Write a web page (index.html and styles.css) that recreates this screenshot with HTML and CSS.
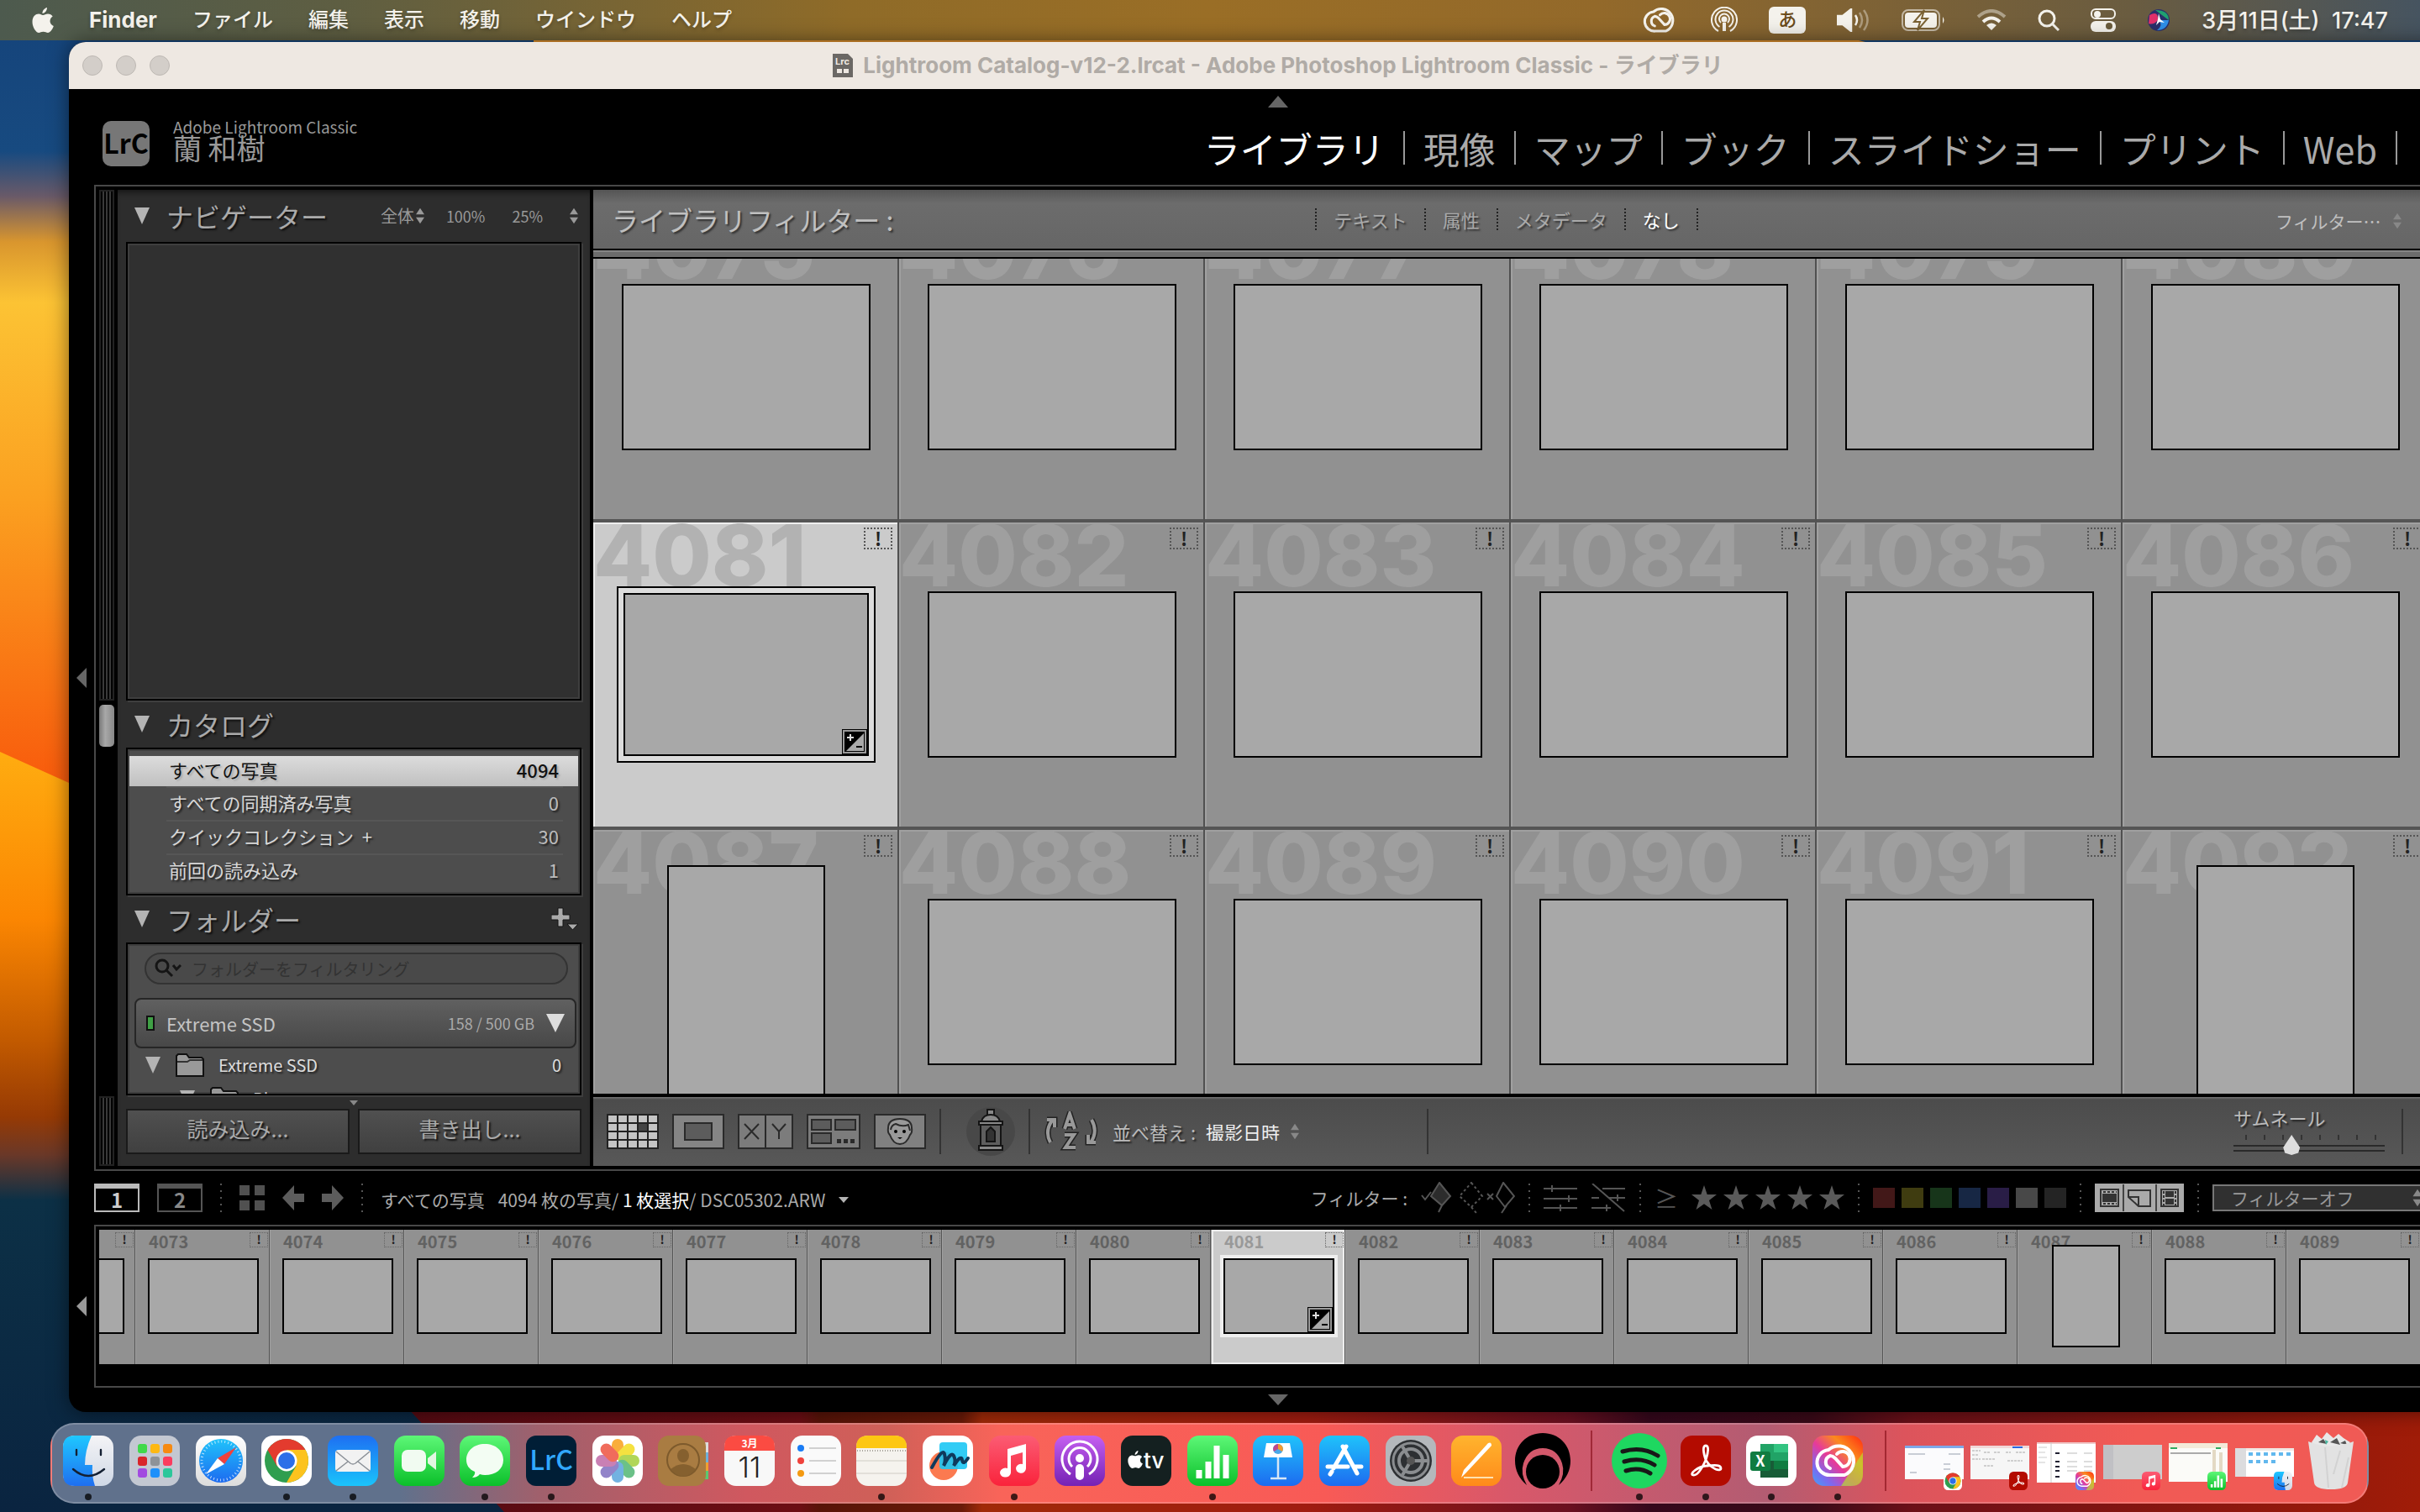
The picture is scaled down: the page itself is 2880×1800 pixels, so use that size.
FILE: index.html
```html
<!DOCTYPE html>
<html lang="ja">
<head>
    <meta charset="UTF-8">
    <title>Lightroom Classic - ライブラリ</title>
    <link rel="stylesheet" href="styles.css">
</head>
<body>
    <!-- shared icons -->
    <svg class="defs" aria-hidden="true">
        <defs>
            <linearGradient id="gBlue" x2="0" y2="1"><stop offset="0" stop-color="#1e6ff2"/><stop offset="1" stop-color="#1ac4fb"/></linearGradient>
            <linearGradient id="gSky" x2="0" y2="1"><stop offset="0" stop-color="#1fc3fb"/><stop offset="1" stop-color="#1d6bf0"/></linearGradient>
            <linearGradient id="gGreen" x2="0" y2="1"><stop offset="0" stop-color="#5df777"/><stop offset="1" stop-color="#0bc02a"/></linearGradient>
            <linearGradient id="gRed" x2="0" y2="1"><stop offset="0" stop-color="#fb5c74"/><stop offset="1" stop-color="#fa233b"/></linearGradient>
            <linearGradient id="gPurple" x2="0" y2="1"><stop offset="0" stop-color="#c55ff0"/><stop offset="1" stop-color="#7422b4"/></linearGradient>
            <linearGradient id="gOrange" x2="0" y2="1"><stop offset="0" stop-color="#ffb42e"/><stop offset="1" stop-color="#ff8a1a"/></linearGradient>
            <linearGradient id="gWhite" x2="0" y2="1"><stop offset="0" stop-color="#fff"/><stop offset="1" stop-color="#dcdcdc"/></linearGradient>
            <linearGradient id="gFace" x2="0" y2="1"><stop offset="0" stop-color="#f4f4f6"/><stop offset="1" stop-color="#cfd8e6"/></linearGradient>
            <linearGradient id="gFinder" x2="0" y2="1"><stop offset="0" stop-color="#1ec8ff"/><stop offset="1" stop-color="#1f6ff0"/></linearGradient>
            <linearGradient id="gRain" x1="1" y1="0" x2="0" y2="1"><stop offset="0" stop-color="#ff2a10"/><stop offset=".3" stop-color="#fb8a1e"/><stop offset=".55" stop-color="#e63a9a"/><stop offset=".8" stop-color="#7a6af0"/><stop offset="1" stop-color="#3fa4f8"/></linearGradient>
            <symbol id="i-finder" viewBox="0 0 60 60">
                <rect width="60" height="60" rx="14" fill="url(#gFace)"/>
                <path d="M14 0H34Q26 18 26 35H35Q34 48 38 60H14Q0 60 0 46V14Q0 0 14 0Z" fill="url(#gFinder)"/>
                <path d="M16 17v6M45 17v6M12 40Q30 56 49 40" fill="none" stroke="#142033" stroke-width="2.4" stroke-linecap="round"/>
            </symbol>
            <symbol id="i-chrome" viewBox="0 0 60 60">
                <rect width="60" height="60" rx="14" fill="#fff"/>
                <circle cx="30" cy="30" r="26" fill="#2f9e4f"/>
                <path d="M7.500 17A26 26 0 0 1 52.500 17H30L18.700 36.500Z" fill="#e33b2e"/>
                <path d="M52.500 17A26 26 0 0 1 30 56L41.300 36.500L30 17Z" fill="#fcc31e"/>
                <circle cx="30" cy="30" r="12.500" fill="#fff"/><circle cx="30" cy="30" r="10" fill="#2b6fe8"/>
            </symbol>
            <symbol id="i-music" viewBox="0 0 60 60">
                <rect width="60" height="60" rx="14" fill="url(#gRed)"/>
                <path d="M22 16L44 10V39A6 5.500 0 1 1 40 34V20L26 24V44A6.500 5.500 0 1 1 22 39Z" fill="#fff"/>
            </symbol>
            <symbol id="i-numbers" viewBox="0 0 60 60">
                <rect width="60" height="60" rx="14" fill="url(#gGreen)"/>
                <path d="M14 51V41M25 51V31M35 51V12M46 51V23" stroke="#fff" stroke-width="7"/>
            </symbol>
            <symbol id="i-acrobat" viewBox="0 0 60 60">
                <rect width="60" height="60" rx="14" fill="#b30b00"/>
                <path d="M30 29C27 20 26 12 30 12S33 20 30 29C26 38 20 48 15 47S20 37 31 36S48 35 48 39S37 41 30 29Z" fill="none" stroke="#fff" stroke-width="2.800"/>
            </symbol>
            <symbol id="i-cloud" viewBox="0 0 60 60">
                <path d="M22 47A15 15 0 0 1 19 17A18 18 0 1 1 38 47Z" fill="none" stroke="currentColor" stroke-width="4"/>
                <path d="M21 39A8 8 0 0 1 21 24Q24 24 27 27L36 37A9 9 0 1 0 29 22" fill="none" stroke="currentColor" stroke-width="4" stroke-linecap="round"/>
            </symbol>
            <symbol id="i-cc" viewBox="0 0 60 60">
                <rect width="60" height="60" rx="14" fill="url(#gRain)"/>
                <path d="M60 20V46Q60 60 46 60H34Z" fill="#b6dc30" opacity=".7"/>
                <use href="#i-cloud" color="#fff"/>
            </symbol>
            <symbol id="i-apple" viewBox="0 0 26 30">
                <path d="M18 0C18 4 15 7 12.500 7C12.200 4 15 .5 18 0ZM13 9C15 9 16.500 7.500 19 7.500C21.500 7.500 23.500 8.800 24.700 10.500C20 13.500 20.800 20 25.800 22C24.500 26 21.500 30 19 30C17 30 16 28.800 13.500 28.800S10 30 8.200 30C5 30 .5 23.500 .5 17C.5 10.500 4.500 7.600 8 7.600C10.300 7.600 11.500 9 13 9Z" fill="currentColor"/>
            </symbol>
            <symbol id="i-updown" viewBox="0 0 12 26"><path d="M6 2L12 11H0ZM6 24L0 15H12Z" fill="currentColor"/></symbol>
            <symbol id="i-dev" viewBox="0 0 30 30">
                <path d="M0 0H30V30H0Z" fill="#000"/><path d="M2 2H28V28H2Z" fill="none" stroke="#999" stroke-width="2"/><path d="M26 5V26H5Z" fill="#aaa"/>
                <path d="M6 10h8M10 6v8" stroke="#ddd" stroke-width="2"/><path d="M17 21h7" stroke="#000" stroke-width="2"/>
            </symbol>
            <symbol id="i-star" viewBox="0 0 30 30"><path d="M15 0L18.700 11H30L21 18L24.500 29L15 22.300L5.500 29L9 18L0 11H11.300Z" fill="currentColor"/></symbol>
        </defs>
    </svg>

    <svg class="wallpaper" viewBox="0 0 2880 1800" preserveAspectRatio="none" aria-hidden="true">
        <defs>
            <linearGradient id="wLeft" x2="0" y2="1">
                <stop offset="0" stop-color="#15437a"/><stop offset=".1" stop-color="#174a80"/><stop offset=".13" stop-color="#6a5a68"/><stop offset=".16" stop-color="#d9962e"/><stop offset=".2" stop-color="#fcc334"/><stop offset=".33" stop-color="#fba020"/><stop offset=".52" stop-color="#f85a0c"/>
            </linearGradient>
            <linearGradient id="wLow" x2="0" y2="1">
                <stop offset="0" stop-color="#ffac10"/><stop offset=".22" stop-color="#fb8602"/><stop offset=".38" stop-color="#c25a00"/><stop offset=".48" stop-color="#963a04"/><stop offset=".53" stop-color="#6a3828"/><stop offset=".59" stop-color="#0c3046"/><stop offset="1" stop-color="#0a2440"/>
            </linearGradient>
            <linearGradient id="wBottom">
                <stop offset="0" stop-color="#550a12"/><stop offset=".2" stop-color="#6c0e14"/><stop offset=".21" stop-color="#581408"/><stop offset=".28" stop-color="#6a1a08"/><stop offset=".29" stop-color="#a02a08"/><stop offset=".45" stop-color="#a01c10"/><stop offset=".58" stop-color="#6a1020"/><stop offset=".62" stop-color="#35081c"/><stop offset=".7" stop-color="#3a0a18"/><stop offset=".75" stop-color="#6c1018"/><stop offset="1" stop-color="#a01c08"/>
            </linearGradient>
        </defs>
        <path d="M0 0H2880V1800H0Z" fill="url(#wLeft)"/>
        <path d="M0 895L82 932H900V1800H0Z" fill="url(#wLow)"/>
        <path d="M635 40H2180L2260 60H635Z" fill="#e0902e"/>
        <path d="M470 1660H2880V1800H600Z" fill="url(#wBottom)"/>
    </svg>

    <header class="menubar">
        <a class="apple" href="#" aria-label="Apple"><svg width="26" height="30"><use href="#i-apple"/></svg></a>
        <nav class="menus">
            <a class="app-name" href="#">Finder</a>
            <a href="#">ファイル</a>
            <a href="#">編集</a>
            <a href="#">表示</a>
            <a href="#">移動</a>
            <a href="#">ウインドウ</a>
            <a href="#">ヘルプ</a>
        </nav>
        <div class="status">
            <svg width="44" height="40" viewBox="4 4 54 52"><use href="#i-cloud" width="60" height="60"/></svg>
            <svg width="32" height="32" viewBox="0 0 32 32" fill="none" stroke="currentColor" stroke-width="2"><path d="M9 29A15 15 0 1 1 23 29M10.500 24A10.500 10.500 0 1 1 21.500 24M12 19A6 6 0 1 1 20 19"/><circle cx="16" cy="15" r="2.500" fill="currentColor"/><path d="M16 19V29" stroke-width="4"/></svg>
            <span class="ime">あ</span>
            <svg width="40" height="28" viewBox="0 0 40 28" fill="none" stroke="currentColor" stroke-width="2.500"><path d="M1 9H7L17 1V27L7 19H1Z" fill="currentColor"/><path d="M22 8Q26 14 22 20"/><path d="M27 5Q33 14 27 23M32 2Q41 14 32 26" opacity=".4"/></svg>
            <svg width="52" height="26" viewBox="0 0 52 26"><rect x="1" y="1" width="44" height="24" rx="7" fill="none" stroke="currentColor" stroke-width="2" opacity=".6"/><rect x="4" y="4" width="38" height="18" rx="4" fill="currentColor"/><path d="M49 9Q52 13 49 17Z" fill="currentColor"/><path d="M27 1L15 15H22L19 25L31 11H24Z" fill="currentColor" stroke="#7a6132" stroke-width="2"/></svg>
            <svg width="36" height="26" viewBox="0 0 36 26" fill="none" stroke="currentColor" stroke-width="4"><path d="M2 9Q18 -5 34 9" opacity=".45"/><path d="M8 15Q18 6 28 15"/><path d="M18 25L12 19Q18 14 24 19Z" fill="currentColor" stroke="none"/></svg>
            <svg width="26" height="26" viewBox="0 0 26 26" fill="none" stroke="currentColor" stroke-width="3"><circle cx="11" cy="11" r="9"/><path d="M17 17L25 25"/></svg>
            <svg width="30" height="28" viewBox="0 0 30 28"><rect x="1" y="1" width="28" height="11" rx="5" fill="none" stroke="currentColor" stroke-width="2"/><circle cx="8" cy="7" r="4" fill="currentColor"/><rect y="15" width="30" height="13" rx="6" fill="currentColor"/><circle cx="22" cy="21" r="4" fill="#6a5c3c"/></svg>
            <svg width="28" height="28" viewBox="0 0 28 28"><circle cx="14" cy="14" r="13" fill="#2a2f6a"/><path d="M3 8Q14 2 13 14Q8 20 2 18Z" fill="#e0306a"/><path d="M10 2Q26 2 26 14Q18 8 10 2Z" fill="#1fa070"/><path d="M26 14Q24 26 12 26Q20 20 14 14Z" fill="#2f8fe8"/><path d="M14 6L16 13L21 17L15 16L11 20L13 13Z" fill="#fff"/></svg>
            <time>3月11日(土)&nbsp; 17:47</time>
        </div>
    </header>

    <main class="window">
        <div class="titlebar">
            <div class="lights"><span></span><span></span><span></span></div>
            <div class="title">
                <svg width="24" height="28" viewBox="0 0 24 28"><path d="M0 0H18L24 6V28H0Z" fill="#6b6865"/><text x="3" y="13" class="doc-label">Lrc</text><path d="M5 18h6v5H5zM13 18h6v5h-6z" fill="#eee8e2"/></svg>
                <span>Lightroom Catalog-v12-2.lrcat - Adobe Photoshop Lightroom Classic - ライブラリ</span>
            </div>
        </div>

        <div class="identity">
            <button class="fold up" aria-label="モジュールピッカーを隠す"></button>
            <div class="plate">
                <div class="lrc-logo">LrC</div>
                <div class="owner"><small>Adobe Lightroom Classic</small><b>蘭 和樹</b></div>
            </div>
            <nav class="modules">
                <a class="active" href="#">ライブラリ</a>
                <a href="#">現像</a>
                <a href="#">マップ</a>
                <a href="#">ブック</a>
                <a href="#">スライドショー</a>
                <a href="#">プリント</a>
                <a href="#">Web</a>
            </nav>
        </div>

        <div class="workspace-row">
            <div class="gutter"><button class="fold left" aria-label="左パネルを隠す"></button></div>
            <div class="workspace">
                <div class="scroll">
                    <div class="strips top"></div>
                    <div class="thumb"></div>
                    <div class="hole"></div>
                    <div class="strips"></div>
                </div>

                <aside class="panel">
                    <div class="head nav-head">
                        <i class="tri"></i><h2>ナビゲーター</h2>
                        <div class="zoom">
                            <button class="fit">全体<svg width="10" height="22"><use href="#i-updown"/></svg></button>
                            <button>100%</button>
                            <button>25%</button>
                            <svg width="10" height="22"><use href="#i-updown"/></svg>
                        </div>
                    </div>
                    <div class="box preview"></div>

                    <div class="head"><i class="tri"></i><h2>カタログ</h2></div>
                    <div class="box catalog">
                        <a class="selected" href="#">すべての写真<span>4094</span></a>
                        <a href="#">すべての同期済み写真<span>0</span></a>
                        <a href="#">クイックコレクション &nbsp;+<span>30</span></a>
                        <a href="#">前回の読み込み<span>1</span></a>
                    </div>

                    <div class="head">
                        <i class="tri"></i><h2>フォルダー</h2>
                        <button class="add" aria-label="フォルダーを追加"><svg width="32" height="28" viewBox="0 0 32 28"><path d="M8 1h6v8h8v6h-8v8H8v-8H0V9h8z" fill="#aaa" stroke="#151515"/><path d="M19 20H32L25.500 27Z" fill="#aaa" stroke="#151515"/></svg></button>
                    </div>
                    <div class="box folders">
                        <label class="search">
                            <svg width="32" height="24" viewBox="0 0 32 24" fill="none" stroke="#151515" stroke-width="3"><circle cx="9" cy="9" r="7"/><path d="M14 14L21 21M22 8L26 13L31 8"/></svg>
                            <input type="text" placeholder="フォルダーをフィルタリング" aria-label="フォルダーをフィルタリング">
                        </label>
                        <button class="volume"><i class="led"></i><span>Extreme SSD</span><small>158 / 500 GB</small><i class="tri big"></i></button>
                        <a class="folder" href="#"><i class="tri"></i>
                            <svg width="34" height="28" viewBox="0 0 34 28"><path d="M1 27V3L3 1H13L16 5H31L33 7V27Z" fill="#999" stroke="#111" stroke-width="2"/><path d="M2 10H14L17 8H32" stroke="#333" stroke-width="2" fill="none"/></svg>
                            <span>Extreme SSD</span><b>0</b></a>
                        <a class="folder sub" href="#"><i class="tri"></i>
                            <svg width="34" height="28" viewBox="0 0 34 28"><path d="M1 27V3L3 1H13L16 5H31L33 7V27Z" fill="#999" stroke="#111" stroke-width="2"/></svg>
                            <span>Photo</span></a>
                    </div>
                    <i class="more"></i>
                    <div class="actions"><button>読み込み...</button><button>書き出し...</button></div>
                </aside>

                <section class="library">
                    <div class="filter-bar">
                        <h2>ライブラリフィルター :</h2>
                        <div class="tabs">
                            <button>テキスト</button><button>属性</button><button>メタデータ</button><button class="active">なし</button>
                        </div>
                        <label class="pick preset"><select aria-label="フィルタープリセット"><option>フィルター…</option></select><svg width="10" height="22"><use href="#i-updown"/></svg></label>
                    </div>
                    <div class="filter-edge"></div>

                    <div class="grid-view">
                        <div class="grid">
                            <div class="cell"><b>4075</b><i class="badge">!</i><div class="photo"></div></div>
                            <div class="cell"><b>4076</b><i class="badge">!</i><div class="photo"></div></div>
                            <div class="cell"><b>4077</b><i class="badge">!</i><div class="photo"></div></div>
                            <div class="cell"><b>4078</b><i class="badge">!</i><div class="photo"></div></div>
                            <div class="cell"><b>4079</b><i class="badge">!</i><div class="photo"></div></div>
                            <div class="cell"><b>4080</b><i class="badge">!</i><div class="photo"></div></div>
                            <div class="cell selected"><b>4081</b><i class="badge">!</i><div class="mat"><div class="photo"><svg class="dev" width="30" height="30"><use href="#i-dev"/></svg></div></div></div>
                            <div class="cell"><b>4082</b><i class="badge">!</i><div class="photo"></div></div>
                            <div class="cell"><b>4083</b><i class="badge">!</i><div class="photo"></div></div>
                            <div class="cell"><b>4084</b><i class="badge">!</i><div class="photo"></div></div>
                            <div class="cell"><b>4085</b><i class="badge">!</i><div class="photo"></div></div>
                            <div class="cell"><b>4086</b><i class="badge">!</i><div class="photo"></div></div>
                            <div class="cell portrait"><b>4087</b><i class="badge">!</i><div class="photo"></div></div>
                            <div class="cell"><b>4088</b><i class="badge">!</i><div class="photo"></div></div>
                            <div class="cell"><b>4089</b><i class="badge">!</i><div class="photo"></div></div>
                            <div class="cell"><b>4090</b><i class="badge">!</i><div class="photo"></div></div>
                            <div class="cell"><b>4091</b><i class="badge">!</i><div class="photo"></div></div>
                            <div class="cell portrait"><b>4092</b><i class="badge">!</i><div class="photo"></div></div>
                        </div>
                    </div>

                    <div class="toolbar">
                        <button aria-label="グリッド表示"><svg width="62" height="42" viewBox="0 0 62 42"><path d="M0 0H62V42H0Z" fill="#222"/><path d="M2 6H60M2 16H60M2 26H60M2 36H60" stroke="#c4c4c4" stroke-width="8" stroke-dasharray="10 2"/><path d="M38 12H48V20H38Z" fill="#444"/></svg></button>
                        <button aria-label="ルーペ表示"><svg width="62" height="42" viewBox="0 0 62 42"><path d="M1 1H61V41H1Z" fill="#858585" stroke="#2a2a2a" stroke-width="2"/><path d="M15 11H47V31H15Z" fill="#5c5c5c" stroke="#2a2a2a" stroke-width="2"/></svg></button>
                        <button aria-label="比較表示"><svg width="66" height="42" viewBox="0 0 66 42"><path d="M1 1H65V41H1ZM33 1V41" fill="#7c7c7c" stroke="#2a2a2a" stroke-width="2"/><path d="M8 12L25 30M25 12L8 30M41 12L49 21L57 12M49 21V30" stroke="#2a2a2a" stroke-width="2" fill="none"/></svg></button>
                        <button aria-label="選別表示"><svg width="64" height="42" viewBox="0 0 64 42"><path d="M1 1H63V41H1Z" fill="#7c7c7c" stroke="#2a2a2a" stroke-width="2"/><path d="M6 7H29V19H6ZM34 7H58V19H34ZM6 23H29V35H6Z" fill="#5c5c5c" stroke="#2a2a2a" stroke-width="2"/><path d="M36 30h5v5h-5zM44 30h5v5h-5zM52 30h5v5h-5z" fill="#2a2a2a"/></svg></button>
                        <button aria-label="人物表示"><svg width="62" height="42" viewBox="0 0 62 42"><path d="M1 1H61V41H1Z" fill="#808080" stroke="#2a2a2a" stroke-width="2"/><path d="M17 17Q17 6 31 6T45 17Q46 22 43 25Q39 36 31 36T19 25Q16 22 17 17ZM20 19Q21 13 26 12Q34 16 41 13L43 20" fill="#999" stroke="#2a2a2a" stroke-width="2"/><circle cx="26" cy="21" r="2"/><circle cx="36" cy="21" r="2"/><path d="M28 28h6l-3 2z"/></svg></button>
                        <i class="sep"></i>
                        <button class="spray" aria-label="スプレー"><svg width="58" height="58" viewBox="0 0 58 58"><circle cx="29" cy="29" r="29" fill="#484848"/><g fill="#888" stroke="#151515" stroke-width="2"><path d="M25 3h8v7h-8z"/><path d="M18 17Q20 9 29 9T40 17Z"/><path d="M17 21H41V46H17Z" fill="#5e5e5e"/><path d="M15 17H43V21H15ZM15 46H43V51H15Z"/><path d="M24 41V29L29 24L34 29V41Z" fill="#333"/></g></svg></button>
                        <i class="sep"></i>
                        <button aria-label="並べ替え方向"><svg width="66" height="48" viewBox="0 0 66 48" fill="none" stroke="#222" stroke-width="7"><path d="M8 37Q1 24 10 11M4 10H13V19M57 10Q65 24 56 37M62 37H53V28M25 21L31 3L37 21M27 16H36M25 28H36L26 43H38"/><path d="M8 37Q1 24 10 11M4 10H13V19M57 10Q65 24 56 37M62 37H53V28M25 21L31 3L37 21M27 16H36M25 28H36L26 43H38" stroke="#999" stroke-width="4"/></svg></button>
                        <label class="pick sort"><span>並べ替え :</span><select><option>撮影日時</option></select><svg width="10" height="26"><use href="#i-updown"/></svg></label>
                        <i class="sep after-sort"></i>
                        <label class="size">サムネール<input type="range" min="0" max="100" value="37"></label>
                        <i class="sep"></i>
                    </div>
                </section>
            </div>
        </div>

        <div class="film-bar">
            <button class="screen on">1</button>
            <button class="screen">2</button>
            <i class="dots"></i>
            <button aria-label="グリッド"><svg width="30" height="30" viewBox="0 0 30 30"><path d="M0 0h12v12H0zM18 0h12v12H18zM0 18h12v12H0zM18 18h12v12H18z" fill="#505050"/></svg></button>
            <button aria-label="戻る"><svg width="26" height="30" viewBox="0 0 26 30"><path d="M0 15L14 0V10H26V20H14V30Z" fill="#5c5c5c"/></svg></button>
            <button aria-label="進む"><svg width="26" height="30" viewBox="0 0 26 30"><path d="M26 15L12 0V10H0V20H12V30Z" fill="#5c5c5c"/></svg></button>
            <i class="dots"></i>
            <div class="crumbs"><span>すべての写真</span><span>4094 枚の写真/ <b>1 枚選択</b>/ DSC05302.ARW</span><i class="tri"></i></div>

            <div class="filters">
                <span>フィルター :</span>
                <svg width="112" height="38" viewBox="0 0 112 38" fill="none" stroke="#555" stroke-width="2"><path d="M22 1L35 17L25 28L12 17ZM25 28L21 36" fill="#2c2c2c"/><path d="M1 16L5 21L12 12"/><path d="M60 1L73 17L60 30L46 17ZM60 30L66 37" stroke-dasharray="3 3"/><path d="M98 1L111 17L100 30L90 17ZM102 28L96 37M79 14L86 21M86 14L79 21"/></svg>
                <i class="dots"></i>
                <svg width="98" height="34" viewBox="0 0 98 34" stroke="#555" stroke-width="2"><path d="M0 6H40M0 18H40M0 29H40M10 2V10M30 14V22M20 25V33M58 0L96 33M70 6H97M57 17H66M78 17H97M88 13V21M57 29H80M75 25V33"/></svg>
                <i class="dots"></i>
                <span class="ge">≥</span>
                <span class="stars"><svg width="30" height="30"><use href="#i-star"/></svg><svg width="30" height="30"><use href="#i-star"/></svg><svg width="30" height="30"><use href="#i-star"/></svg><svg width="30" height="30"><use href="#i-star"/></svg><svg width="30" height="30"><use href="#i-star"/></svg></span>
                <i class="dots"></i>
                <span class="swatches"><i class="red"></i><i class="yellow"></i><i class="green"></i><i class="blue"></i><i class="purple"></i><i class="white"></i><i class="none"></i></span>
                <i class="dots"></i>
                <svg width="106" height="34" viewBox="0 0 106 34"><path d="M0 0H106V34H0Z" fill="#aaa"/><path d="M34 1V33M73 1V33" stroke="#444" stroke-width="2"/><g fill="none" stroke="#333" stroke-width="2"><path d="M7 7H28V27H7Z"/><path d="M10 13H25V21H10Z" fill="#333"/><path d="M10 10H26M10 24H26" stroke-dasharray="3 2"/><path d="M40 8H66V27H52L40 16ZM40 16H52V27"/><path d="M79 7H99V27H79Z"/><path d="M85 10H93V15H85ZM85 19H93V24H85Z" fill="#333"/><path d="M82 9V26M96 9V26" stroke-dasharray="3 2"/></g></svg>
                <i class="dots"></i>
                <label class="pick off"><select aria-label="フィルター"><option>フィルターオフ</option></select><svg width="14" height="24"><use href="#i-updown"/></svg></label>
            </div>
        </div>

        <div class="film-row">
            <div class="gutter"><button class="fold left light" aria-label="前へ"></button></div>
            <div class="filmstrip">
                <div class="film">
                    <div class="frame"><b>4072</b><i class="badge">!</i><div class="photo"></div></div>
                    <div class="frame"><b>4073</b><i class="badge">!</i><div class="photo"></div></div>
                    <div class="frame"><b>4074</b><i class="badge">!</i><div class="photo"></div></div>
                    <div class="frame"><b>4075</b><i class="badge">!</i><div class="photo"></div></div>
                    <div class="frame"><b>4076</b><i class="badge">!</i><div class="photo"></div></div>
                    <div class="frame"><b>4077</b><i class="badge">!</i><div class="photo"></div></div>
                    <div class="frame"><b>4078</b><i class="badge">!</i><div class="photo"></div></div>
                    <div class="frame"><b>4079</b><i class="badge">!</i><div class="photo"></div></div>
                    <div class="frame"><b>4080</b><i class="badge">!</i><div class="photo"></div></div>
                    <div class="frame selected"><b>4081</b><i class="badge">!</i><div class="photo"><svg class="dev" width="30" height="30"><use href="#i-dev"/></svg></div></div>
                    <div class="frame"><b>4082</b><i class="badge">!</i><div class="photo"></div></div>
                    <div class="frame"><b>4083</b><i class="badge">!</i><div class="photo"></div></div>
                    <div class="frame"><b>4084</b><i class="badge">!</i><div class="photo"></div></div>
                    <div class="frame"><b>4085</b><i class="badge">!</i><div class="photo"></div></div>
                    <div class="frame"><b>4086</b><i class="badge">!</i><div class="photo"></div></div>
                    <div class="frame portrait"><b>4087</b><i class="badge">!</i><div class="photo"></div></div>
                    <div class="frame"><b>4088</b><i class="badge">!</i><div class="photo"></div></div>
                    <div class="frame"><b>4089</b><i class="badge">!</i><div class="photo"></div></div>
                </div>
            </div>
        </div>
        <div class="bottom-edge"><button class="fold down" aria-label="フィルムストリップを隠す"></button></div>
    </main>

    <footer class="dock">
        <div class="apps main">
            <a class="run" href="#" aria-label="Finder"><svg><use href="#i-finder"/></svg></a>
            <a href="#" aria-label="Launchpad"><svg viewBox="0 0 60 60"><rect width="60" height="60" rx="14" fill="#c3c8d2"/><g><rect x="10" y="10" width="11" height="11" rx="3" fill="#3fd94a"/><rect x="25" y="10" width="11" height="11" rx="3" fill="#fdb813"/><rect x="40" y="10" width="11" height="11" rx="3" fill="#f68a12"/><rect x="10" y="25" width="11" height="11" rx="3" fill="#d9252a"/><rect x="25" y="25" width="11" height="11" rx="3" fill="#8e9298"/><rect x="40" y="25" width="11" height="11" rx="3" fill="#fb3c5e"/><rect x="10" y="39" width="11" height="11" rx="3" fill="#a24be0"/><rect x="25" y="39" width="11" height="11" rx="3" fill="#1e90fa"/><rect x="40" y="39" width="11" height="11" rx="3" fill="#2cc79a"/></g></svg></a>
            <a href="#" aria-label="Safari"><svg viewBox="0 0 60 60"><rect width="60" height="60" rx="14" fill="url(#gWhite)"/><circle cx="30" cy="30" r="26" fill="url(#gSky)"/><circle cx="30" cy="30" r="23" fill="none" stroke="#fff" stroke-width="3" stroke-dasharray="1 3" opacity=".7"/><path d="M48 14L34 34L26 27Z" fill="#f0413c"/><path d="M12 46L26 27L34 34Z" fill="#fff"/></svg></a>
            <a class="run" href="#" aria-label="Chrome"><svg><use href="#i-chrome"/></svg></a>
            <a class="run" href="#" aria-label="メール"><svg viewBox="0 0 60 60"><rect width="60" height="60" rx="14" fill="url(#gBlue)"/><rect x="9" y="17" width="42" height="26" rx="4" fill="#f2f2f2"/><path d="M10 19L27 33Q30 35 33 33L50 19M10 42L24 31M50 42L36 31" fill="none" stroke="#8a8f96" stroke-width="1.500"/></svg></a>
            <a href="#" aria-label="FaceTime"><svg viewBox="0 0 60 60"><rect width="60" height="60" rx="14" fill="url(#gGreen)"/><rect x="9" y="17" width="29" height="26" rx="7" fill="#f1fbf1"/><path d="M40 27L50 19V41L40 33Z" fill="#e2f6e2"/></svg></a>
            <a class="run" href="#" aria-label="メッセージ"><svg viewBox="0 0 60 60"><rect width="60" height="60" rx="14" fill="url(#gGreen)"/><path d="M30 10C43 10 52 18 52 29S43 47 30 47Q27 47 24 46Q21 50 15 50Q19 46 18 43C11 40 8 35 8 29C8 18 17 10 30 10Z" fill="#f3fdf3"/></svg></a>
            <a class="run" href="#" aria-label="Lightroom Classic"><svg viewBox="0 0 60 60"><rect width="60" height="60" rx="12" fill="#001e36"/><text x="30" y="41" class="lrc-text">LrC</text></svg></a>
            <a href="#" aria-label="写真"><svg viewBox="0 0 60 60"><rect width="60" height="60" rx="14" fill="#fff"/><g opacity=".85"><rect x="23" y="4" width="14" height="25" rx="7" fill="#f9a01b"/><rect x="23" y="4" width="14" height="25" rx="7" fill="#f4dc1f" transform="rotate(45 30 30)"/><rect x="23" y="4" width="14" height="25" rx="7" fill="#a4cf3c" transform="rotate(90 30 30)"/><rect x="23" y="4" width="14" height="25" rx="7" fill="#52b774" transform="rotate(135 30 30)"/><rect x="23" y="4" width="14" height="25" rx="7" fill="#5aa5dc" transform="rotate(180 30 30)"/><rect x="23" y="4" width="14" height="25" rx="7" fill="#7f6fc0" transform="rotate(225 30 30)"/><rect x="23" y="4" width="14" height="25" rx="7" fill="#c06aa8" transform="rotate(270 30 30)"/><rect x="23" y="4" width="14" height="25" rx="7" fill="#ee5340" transform="rotate(315 30 30)"/></g></svg></a>
            <a href="#" aria-label="連絡先"><svg viewBox="0 0 60 60"><path d="M54 8h6v12h-6z" fill="#ddd"/><path d="M54 20h6v12h-6z" fill="#6fb0d8"/><path d="M54 32h6v10h-6z" fill="#f0a030"/><path d="M54 42h6v10h-6z" fill="#5cc870"/><rect width="57" height="60" rx="13" fill="#a97c42"/><g fill="none" stroke="#7d5a2c" stroke-width="2"><circle cx="30" cy="29" r="19"/></g><ellipse cx="30" cy="24" rx="7" ry="8" fill="#85602f"/><path d="M15 40Q30 28 45 40Q30 57 15 40Z" fill="#85602f"/></svg></a>
            <a href="#" aria-label="カレンダー"><svg viewBox="0 0 60 60"><rect width="60" height="60" rx="14" fill="#f8f8f8"/><path d="M0 18V14Q0 0 14 0H46Q60 0 60 14V18Z" fill="#fb4b42"/><text x="30" y="14" class="cal-month">3月</text><text x="30" y="50" class="cal-day">11</text></svg></a>
            <a href="#" aria-label="リマインダー"><svg viewBox="0 0 60 60"><rect width="60" height="60" rx="14" fill="#fafafa"/><g stroke="#c4c4c4" stroke-width="1.500"><path d="M22 15H54M22 30H54M22 45H54"/></g><circle cx="12" cy="15" r="4" fill="#1a7cf5"/><circle cx="12" cy="30" r="4" fill="#f0423c"/><circle cx="12" cy="45" r="4" fill="#f49a12"/></svg></a>
            <a class="run" href="#" aria-label="メモ"><svg viewBox="0 0 60 60"><rect width="60" height="60" rx="14" fill="#f5f3ee"/><path d="M0 15V14Q0 0 14 0H46Q60 0 60 14V15Z" fill="#fdc713"/><path d="M1 18H59" stroke="#a9a69e" stroke-dasharray="1 2" stroke-width="2"/><path d="M0 30H60M0 45H60" stroke="#cfccc4"/></svg></a>
            <a href="#" aria-label="フリーボード"><svg viewBox="0 0 60 60"><rect width="60" height="60" rx="14" fill="#fff"/><circle cx="25" cy="36" r="17" fill="#fb7a50"/><rect x="20" y="8" width="33" height="32" rx="4" fill="#1cc7f4" opacity=".9"/><path d="M11 38Q24 14 26 22T25 36Q34 18 37 24T37 36Q46 22 47 29T54 27" fill="none" stroke="#0f3a5c" stroke-width="4" stroke-linecap="round"/></svg></a>
            <a class="run" href="#" aria-label="ミュージック"><svg><use href="#i-music"/></svg></a>
            <a href="#" aria-label="Podcast"><svg viewBox="0 0 60 60"><rect width="60" height="60" rx="14" fill="url(#gPurple)"/><g fill="none" stroke="#fff" stroke-width="3"><path d="M19 46A21 21 0 1 1 41 46M21 37A13 13 0 1 1 39 37"/></g><circle cx="30" cy="27" r="5" fill="#fff"/><rect x="25" y="34" width="10" height="19" rx="5" fill="#fff"/></svg></a>
            <a href="#" aria-label="Apple TV"><svg viewBox="0 0 60 60"><rect width="60" height="60" rx="14" fill="#142020"/><svg x="8" y="18" width="18" height="21" color="#fff"><use href="#i-apple"/></svg><text x="27" y="39" class="tv">tv</text></svg></a>
            <a class="run" href="#" aria-label="Numbers"><svg><use href="#i-numbers"/></svg></a>
            <a href="#" aria-label="Keynote"><svg viewBox="0 0 60 60"><rect width="60" height="60" rx="14" fill="url(#gSky)"/><path d="M16 9H44L47 26H13Z" fill="#fff"/><circle cx="30" cy="16" r="6" fill="#49a8e8"/><path d="M30 16V10A6 6 0 0 1 35 19Z" fill="#f39a2b"/><path d="M30 16L25 19A6 6 0 0 1 30 10Z" fill="#c0478c"/><path d="M30 26V50M21 51H40" stroke="#d8e6f5" stroke-width="2.500"/></svg></a>
            <a href="#" aria-label="App Store"><svg viewBox="0 0 60 60"><rect width="60" height="60" rx="14" fill="url(#gSky)"/><path d="M32 13L17 39M28 13L45 45M10 37H34M41 37H50M15 43L13 46" stroke="#fff" stroke-width="5" stroke-linecap="round"/></svg></a>
            <a href="#" aria-label="システム設定"><svg viewBox="0 0 60 60"><rect width="60" height="60" rx="14" fill="#b4b8bc"/><circle cx="30" cy="30" r="25" fill="#2d3033"/><circle cx="30" cy="30" r="21" fill="none" stroke="#8a8d90" stroke-width="3"/><circle cx="30" cy="30" r="14" fill="none" stroke="#8a8d90" stroke-width="4"/><path d="M30 30H50M30 30L20 13M30 30L20 47" stroke="#8a8d90" stroke-width="4"/><circle cx="30" cy="30" r="5" fill="#555"/></svg></a>
            <a href="#" aria-label="Pages"><svg viewBox="0 0 60 60"><rect width="60" height="60" rx="14" fill="url(#gOrange)"/><path d="M48 12L18 44L12 50L15 41L44 9Q48 7 48 12Z" fill="#fff"/><path d="M15 50H50" stroke="#ffe2b0" stroke-width="2"/></svg></a>
            <a href="#" aria-label="Canary"><svg class="wide" viewBox="0 0 66 66"><path d="M33 0C52 0 66 14 66 33Q66 50 52 62Q60 48 56 36Q50 18 33 18T10 36Q6 48 14 62Q0 50 0 33C0 14 14 0 33 0Z"/><circle cx="33" cy="46" r="20"/></svg></a>
        </div>
        <i class="dock-sep"></i>
        <div class="apps recent">
            <a class="run" href="#" aria-label="Spotify"><svg class="wide" viewBox="0 0 66 66"><circle cx="33" cy="33" r="33" fill="#1ed760"/><path d="M13 22Q36 15 55 27M15 34Q35 28 51 38M17 45Q33 40 46 48" fill="none" stroke="#181818" stroke-width="5" stroke-linecap="round"/></svg></a>
            <a class="run" href="#" aria-label="Acrobat"><svg><use href="#i-acrobat"/></svg></a>
            <a class="run" href="#" aria-label="Excel"><svg viewBox="0 0 60 60"><rect width="60" height="60" rx="14" fill="#fff"/><path d="M17 10H50V50H17Z" fill="#21a366"/><path d="M33 10H50V20H33Z" fill="#33c481"/><path d="M17 30H33V50H17Z" fill="#185c37"/><path d="M33 30H50V40H33Z" fill="#107c41"/><path d="M33 40H50V50H33Z" fill="#185c37"/><rect x="5" y="19" width="24" height="23" rx="3" fill="#107c41"/><text x="17" y="37" class="xl">X</text></svg></a>
            <a class="run" href="#" aria-label="Creative Cloud"><svg><use href="#i-cc"/></svg></a>
        </div>
        <i class="dock-sep"></i>
        <div class="apps minis">
            <a href="#" aria-label="Chrome ウインドウ"><svg class="mini" viewBox="0 0 70 60"><path d="M0 12H70V52H0Z" fill="#fbfbfd"/><path d="M0 12H70V15H0Z" fill="#7fa8e8"/><path d="M4 22H24M52 22H66M6 44H14M46 34H54M46 40H54" stroke="#c9cdd6" stroke-width="2"/><use href="#i-chrome" x="46" y="43" width="22" height="22"/></svg></a>
            <a href="#" aria-label="Acrobat ウインドウ"><svg class="mini" viewBox="0 0 70 60"><path d="M0 12H70V52H0Z" fill="#f6f6f6"/><path d="M0 12H70V15H0Z" fill="#f0d8d8"/><path d="M50 14H62" stroke="#2a6ae0" stroke-width="2"/><path d="M2 18H12M2 23H10M2 28H12M16 20H24M28 20H36M42 20H48M54 20H66M14 28H30M16 36H28M44 30H62" stroke="#a8a8a8" stroke-dasharray="3 1"/><use href="#i-acrobat" x="46" y="43" width="22" height="22"/></svg></a>
            <a href="#" aria-label="Creative Cloud ウインドウ"><svg class="mini" viewBox="0 0 70 60"><path d="M0 8H70V56H0Z" fill="#fff"/><path d="M0 8H70V10H0Z" fill="#f0c8c8"/><path d="M17 8V56M2 14H12M2 20H10M2 26H12M2 32H10" stroke="#ccc"/><path d="M22 21H27M22 31H27M22 37H27M22 42H27M22 49H27" stroke="#223" stroke-width="2"/><path d="M36 21H66M36 31H66M36 37H66M36 42H66" stroke="#bbb" stroke-dasharray="12 8"/><use href="#i-cc" x="46" y="43" width="22" height="22"/></svg></a>
            <a href="#" aria-label="ミュージック ウインドウ"><svg class="mini" viewBox="0 0 70 60"><path d="M0 11H70V52H0Z" fill="#cdcdcd"/><path d="M0 11H12V52H0Z" fill="#c0c0c4"/><use href="#i-music" x="46" y="43" width="22" height="22"/></svg></a>
            <a href="#" aria-label="Numbers ウインドウ"><svg class="mini" viewBox="0 0 70 60"><path d="M0 9H70V55H0Z" fill="#fbfbf8"/><path d="M0 9H70V15H0Z" fill="#f3ead8"/><path d="M2 21H50" stroke="#aaa" stroke-width="2"/><path d="M2 15H10M56 15H62" stroke="#2faa60" stroke-width="2"/><path d="M54 17V50M62 20V50" stroke="#e3d9c4" stroke-width="4"/><use href="#i-numbers" x="46" y="43" width="22" height="22"/></svg></a>
            <a href="#" aria-label="Finder ウインドウ"><svg class="mini" viewBox="0 0 70 60"><path d="M0 15H70V49H0Z" fill="#fff"/><path d="M0 15H13V49H0Z" fill="#dcdcde"/><path d="M13 15H70V18H13Z" fill="#f1e8e4"/><path d="M16 22H68M16 31H50" stroke="#62b8ee" stroke-width="4" stroke-dasharray="5 4"/><use href="#i-finder" x="46" y="43" width="22" height="22"/></svg></a>
            <a href="#" aria-label="ゴミ箱"><svg class="trash" viewBox="0 0 54 68"><path d="M4 12L10 3L16 8L22 0L30 7L36 2L42 7L50 12L44 18H8Z" fill="#e8e8e8"/><path d="M12 12l6-4 4 6zM26 12l8-5 4 8zM38 13l6-3 2 5z" fill="#555"/><path d="M20 9l4 2-3 4z" fill="#49b8a0"/><path d="M0 11Q27 22 54 11L47 60Q46 68 27 68T7 60Z" fill="#e2e2e2"/><path d="M20 18L24 66M38 22L30 50M48 30L40 66" stroke="#d2d2d2" stroke-width="2"/></svg></a>
        </div>
    </footer>
</body>
</html>
```
FILE: styles.css
```css
* {
    box-sizing: border-box;
}

body {
    margin: 0;
    min-height: 100vh;
    display: flex;
    flex-direction: column;
    overflow: hidden;
    position: relative;
    background: #0a2440;
    color: #aaa;
    font-family: "Noto Sans CJK JP", sans-serif;
    font-size: 22px;
    line-height: 1;
}

a {
    color: inherit;
    text-decoration: none;
}

button, select, input {
    margin: 0;
    padding: 0;
    border: none;
    background: none;
    color: inherit;
    font: inherit;
    line-height: inherit;
}

select {
    appearance: none;
    height: 32px;
}

h2 {
    margin: 0;
    font-size: 32px;
    font-weight: normal;
}

i, b {
    font-style: normal;
}

svg {
    display: block;
    flex: none;
}

.defs {
    position: absolute;
    width: 0;
    height: 0;
}

.wallpaper {
    position: absolute;
    inset: 0;
    width: 100%;
    height: 100%;
    z-index: -1;
}

/* menu bar */
.menubar {
    display: flex;
    align-items: center;
    height: 48px;
    padding: 0 38px;
    background: linear-gradient(90deg, #4d5a4e, #5e5e42 14%, #8f6b28 35%, #9a6e26 50%, #93692a 66%, #6a5c40 88%, #465460);
    color: #f4f2ec;
    font-family: Inter, "Noto Sans CJK JP", sans-serif;
    font-size: 24px;
    font-weight: 500;
    text-shadow: 0 2px 4px rgba(0, 0, 0, 0.3);
}

.menus {
    display: flex;
    align-items: center;
    gap: 42px;
    margin-left: 42px;
}

.app-name {
    font-size: 26px;
    font-weight: bold;
}

.status {
    display: flex;
    align-items: center;
    gap: 37px;
    margin-left: auto;
}

.status time {
    font-size: 27px;
}

.ime {
    width: 44px;
    height: 32px;
    border-radius: 6px;
    background: #f4f2ec;
    color: #6a4a18;
    font-size: 22px;
    line-height: 30px;
    text-align: center;
    text-shadow: none;
}

/* application window */
.window {
    flex: 1;
    display: flex;
    flex-direction: column;
    margin: 2px -80px 0 82px;
    border-radius: 20px;
    overflow: hidden;
    background: #000;
    box-shadow: 0 0 24px rgba(0, 0, 0, 0.5);
}

.titlebar {
    display: flex;
    align-items: center;
    height: 56px;
    padding: 0 16px;
    background: #eee8e2;
}

.lights {
    display: flex;
    gap: 16px;
    width: 110px;
}

.lights span {
    width: 24px;
    height: 24px;
    border: 1px solid #bdb8b3;
    border-radius: 50%;
    background: #d3cec9;
}

.title {
    flex: 1;
    display: flex;
    align-items: center;
    justify-content: center;
    gap: 12px;
    padding-right: 110px;
    color: #b0aba6;
    font-family: Inter, "Noto Sans CJK JP", sans-serif;
    font-size: 26px;
    font-weight: bold;
}

.doc-label {
    font-size: 11px;
    fill: #eee8e2;
}

.identity {
    display: grid;
    grid-template-columns: auto 1fr;
    grid-template-rows: 32px 82px;
}

.fold {
    width: 0;
    height: 0;
    border: 12px solid transparent;
}

.fold.up {
    grid-column: 1 / 3;
    justify-self: center;
    margin-top: 8px;
    border-top-width: 0;
    border-bottom: 14px solid #666;
}

.fold.left {
    border-left-width: 0;
    border-right: 12px solid #666;
}

.fold.light {
    border-right-color: #999;
}

.fold.down {
    border-bottom-width: 0;
    border-top: 13px solid #666;
}

.plate {
    display: flex;
    gap: 28px;
    padding: 6px 0 0 40px;
}

.lrc-logo {
    width: 56px;
    height: 54px;
    border-radius: 10px;
    background: #777;
    color: #000;
    font-size: 32px;
    font-weight: bold;
    line-height: 50px;
    text-align: center;
}

.owner {
    display: flex;
    flex-direction: column;
    color: #999;
}

.owner small {
    font-size: 19px;
    line-height: 14px;
}

.owner b {
    font-size: 34px;
    font-weight: normal;
    line-height: 36px;
}

.modules {
    display: flex;
    justify-content: flex-end;
    padding: 18px 107px 0 0;
    font-size: 43px;
}

.modules a {
    height: 40px;
    padding: 0 22px;
    border-right: 2px solid #999;
    line-height: 40px;
}

.modules .active, .tabs .active {
    color: #fff;
}

.workspace-row {
    flex: 1;
    display: flex;
    margin-right: 76px;
}

.gutter {
    width: 30px;
    display: flex;
    align-items: center;
    padding-left: 9px;
}

.workspace {
    flex: 1;
    min-width: 0;
    display: flex;
    padding: 4px 0 4px 4px;
    border: 2px solid #484848;
    border-right: none;
}

/* panel scroll bar */
.scroll {
    display: flex;
    flex-direction: column;
    width: 18px;
    margin-right: 4px;
}

.strips {
    height: 83px;
    border: 2px solid #222;
    background: repeating-linear-gradient(90deg, #000 0 2px, #3a3a3a 2px 4px);
}

.strips.top {
    flex: 11;
    height: auto;
}

.thumb {
    height: 50px;
    margin-top: 5px;
    border-radius: 5px;
    background: linear-gradient(90deg, #777, #a8a8a8 40%, #888);
}

.hole {
    height: 416px;
}

/* left panel */
.panel {
    display: flex;
    flex-direction: column;
    width: 562px;
    padding: 0 10px 14px;
    background: #2d2d2d;
    box-shadow: inset 0 8px 8px -6px #111;
}

.head {
    display: flex;
    align-items: center;
    height: 56px;
    padding: 0 4px 0 10px;
    text-shadow: 2px 2px 2px #111;
}

.head h2 {
    margin-left: 20px;
}

.nav-head {
    height: 62px;
}

.tri {
    width: 0;
    height: 0;
    border: 9px solid transparent;
    border-top: 20px solid #b4b4b4;
    border-bottom: none;
}

.zoom {
    display: flex;
    align-items: center;
    margin-left: auto;
    color: #999;
    font-size: 18px;
}

.zoom button {
    display: flex;
    align-items: center;
    gap: 2px;
    margin-right: 32px;
}

.zoom .fit {
    margin-right: 26px;
    font-size: 20px;
}

.add {
    margin-left: auto;
}

.box {
    border: 2px solid #000;
    background: #4d4d4d;
    box-shadow: inset 0 0 0 2px #3e3e3e, 2px 2px 0 #3e3e3e;
    overflow: hidden;
}

.preview {
    flex: 1;
    background: #303030;
}

.catalog {
    padding: 8px 2px 8px;
}

.catalog a {
    display: flex;
    align-items: center;
    height: 40px;
    padding: 0 23px 2px 47px;
    color: #d8d8d8;
    text-shadow: 2px 2px 2px #222;
    background: linear-gradient(#565656, #565656) 44px 0 / 472px 2px no-repeat;
}

.catalog span {
    margin-left: auto;
    color: #bbb;
}

.catalog .selected {
    height: 36px;
    padding-bottom: 4px;
    color: #111;
    background: linear-gradient(#dcdcdc, #c0c0c0);
    text-shadow: 2px 2px 2px #aaa;
}

.catalog .selected span {
    color: #111;
    font-weight: 500;
}

.folders {
    height: 182px;
}

.search {
    display: flex;
    align-items: center;
    gap: 12px;
    height: 38px;
    margin: 10px 14px 16px 20px;
    padding: 0 10px;
    border: 2px solid #333;
    border-radius: 19px;
    background: #494949;
    font-size: 20px;
}

.search input {
    flex: 1;
    min-width: 0;
}

.search input::placeholder {
    color: #333;
}

.volume {
    display: flex;
    align-items: center;
    width: 526px;
    height: 60px;
    margin-left: 8px;
    padding: 0 12px;
    border: 2px solid #262626;
    border-radius: 8px;
    background: linear-gradient(#606060, #484848);
    color: #c4c4c4;
}

.led {
    width: 10px;
    height: 18px;
    margin-right: 14px;
    border: 2px solid #111;
    background: #3fa045;
}

.volume small {
    margin-left: auto;
    margin-right: 14px;
    color: #aaa;
    font-size: 18px;
}

.tri.big {
    border-width: 22px 11px 0;
    border-top-color: #ddd;
}

.folder {
    display: flex;
    align-items: center;
    height: 40px;
    padding: 0 22px 0 21px;
    color: #ddd;
    font-size: 20px;
    text-shadow: 2px 2px 2px #222;
}

.folder svg {
    margin: 0 17px 0 18px;
}

.folder b {
    margin-left: auto;
    font-weight: normal;
}

.folder.sub {
    padding-left: 62px;
}

.more {
    align-self: center;
    width: 0;
    height: 0;
    margin: 6px 0 4px;
    border: 5px solid transparent;
    border-top: 6px solid #888;
    border-bottom: none;
}

.actions {
    display: flex;
    gap: 10px;
}

.actions button {
    flex: 1;
    height: 54px;
    padding-bottom: 8px;
    border: 2px solid #1a1a1a;
    background: linear-gradient(#505050, #404040);
    font-size: 25px;
    text-shadow: 2px 2px 2px #111;
}

/* library */
.library {
    flex: 1;
    min-width: 0;
    display: flex;
    flex-direction: column;
    margin-left: 4px;
}

.filter-bar {
    display: grid;
    grid-template-columns: 1fr auto 1fr;
    align-items: center;
    height: 70px;
    padding: 0 26px 0 22px;
    background: linear-gradient(#555, #6c6c6c 16px, #666);
    color: #c0c0c0;
    text-shadow: 2px 2px 2px #333;
}

.tabs {
    display: flex;
    border-left: 2px dotted #222;
}

.tabs button {
    height: 26px;
    padding: 0 20px;
    border-right: 2px dotted #222;
    color: #aaa;
    text-shadow: inherit;
}

.pick {
    display: flex;
    align-items: center;
    gap: 14px;
}

.pick svg {
    color: #888;
}

.preset {
    justify-self: end;
    padding-top: 4px;
    font-size: 21px;
}

.filter-edge {
    height: 12px;
    border: 2px solid #000;
    border-width: 2px 0;
    background: #6c6c6c;
    box-shadow: inset 0 2px #858585;
}

.grid-view {
    flex: 1 1 0;
    min-height: 0;
    overflow: hidden;
    background: #919191;
    border-bottom: 4px solid #000;
}

/* first row is scrolled partly out of view */
.grid {
    display: grid;
    grid-template-columns: repeat(6, 364px);
    grid-auto-rows: 366px;
    margin-top: -52px;
}

.cell {
    position: relative;
    padding: 82px 32px 82px 34px;
    border-right: 2px solid #505050;
    border-bottom: 4px solid #555;
    background: #919191;
    box-shadow: inset 2px 2px #a0a0a0;
}

.cell b {
    position: absolute;
    left: 0;
    top: 0;
    color: #9f9f9f;
    font-family: Inter, sans-serif;
    font-size: 102px;
    font-weight: 800;
    line-height: 78px;
}

.badge {
    position: absolute;
    right: 6px;
    top: 6px;
    width: 34px;
    height: 26px;
    border: 2px dotted #555;
    color: #222;
    font-weight: bold;
    line-height: 20px;
    text-align: center;
}

.photo {
    position: relative;
    height: 198px;
    border: 2px solid #000;
    background: #a8a8a8;
}

.dev {
    position: absolute;
    right: 0;
    bottom: 0;
}

.cell.selected {
    background: #cbcbcb;
    box-shadow: inset 2px 2px #eee;
}

.cell.selected b {
    color: #b2b2b2;
}

.mat {
    position: relative;
    margin: -6px;
    padding: 6px;
    border: 2px solid #000;
    background: #dcdcdc;
}

.mat .photo {
    height: 194px;
}

.cell.portrait {
    padding: 42px 86px 0 88px;
}

.portrait .photo {
    height: 282px;
}

.toolbar {
    display: flex;
    align-items: center;
    gap: 16px;
    height: 82px;
    padding: 0 24px 0 16px;
    background: linear-gradient(#777, #4c4c4c 3px, #585858);
    text-shadow: 2px 2px 2px #222;
}

.sep {
    width: 2px;
    height: 54px;
    background: #333;
}

.spray {
    margin-left: 14px;
}

.sort {
    gap: 12px;
    color: #bbb;
}

.sort select {
    color: #eee;
}

.after-sort {
    margin-left: 136px;
}

.size {
    display: flex;
    flex-direction: column;
    gap: 10px;
    width: 180px;
    margin-left: auto;
    margin-right: 4px;
    color: #bbb;
}

.size input {
    appearance: none;
    height: 24px;
    background:
        linear-gradient(#2a2a2a, #2a2a2a) 0 12px / 100% 2px no-repeat,
        linear-gradient(#2a2a2a, #2a2a2a) 0 18px / 100% 2px no-repeat,
        repeating-linear-gradient(90deg, transparent 0 14px, #333 14px 16px, transparent 16px 22px) 0 0 / 100% 6px no-repeat;
}

.size input::-webkit-slider-thumb {
    appearance: none;
    width: 20px;
    height: 24px;
    background: #ddd;
    clip-path: polygon(50% 0, 100% 62%, 90% 90%, 50% 100%, 10% 90%, 0 62%);
}

/* filmstrip header */
.film-bar {
    display: flex;
    align-items: center;
    gap: 21px;
    height: 64px;
    margin-right: 76px;
    padding-left: 30px;
    color: #aaa;
    font-size: 21px;
}

.screen {
    width: 54px;
    height: 34px;
    border: 2px solid #555;
    border-top-width: 6px;
    color: #888;
    font-size: 24px;
    font-weight: bold;
    line-height: 24px;
}

.screen.on {
    border-color: #bbb;
    color: #ccc;
}

.dots {
    width: 2px;
    height: 34px;
    background: repeating-linear-gradient(#555 0 2px, transparent 2px 8px);
}

.crumbs {
    display: flex;
    align-items: center;
    gap: 16px;
    padding-top: 4px;
}

.crumbs b {
    color: #fff;
    font-weight: normal;
}

.crumbs .tri {
    border-width: 7px 6px 0;
}

.filters {
    display: flex;
    align-items: center;
    gap: 16px;
    margin-left: auto;
}

.ge {
    color: #555;
    font-size: 28px;
}

.stars {
    display: flex;
    gap: 8px;
    color: #5a5a5a;
}

.swatches {
    display: flex;
    gap: 8px;
}

.swatches i {
    width: 26px;
    height: 24px;
}

.red { background: #421818; }
.yellow { background: #3f3c10; }
.green { background: #17351a; }
.blue { background: #172744; }
.purple { background: #291d46; }
.white { background: #484848; }
.none { background: #242424; }

.off {
    height: 32px;
    padding-left: 20px;
    gap: 68px;
    border: 2px solid #777;
    border-right: none;
    background: #303030;
    color: #999;
}

/* filmstrip */
.film-row {
    display: flex;
    margin-right: 76px;
}

.filmstrip {
    flex: 1;
    min-width: 0;
    padding: 4px 0 26px 4px;
    border: 2px solid #484848;
    border-right: none;
}

.film {
    display: flex;
    overflow: hidden;
}

.frame {
    position: relative;
    flex: none;
    width: 160px;
    height: 160px;
    padding: 34px 12px 0 14px;
    border-left: 1px solid #a0a0a0;
    border-right: 1px solid #555;
    background: #919191;
}

.frame:first-child {
    margin-left: -117px;
}

.frame b {
    position: absolute;
    left: 15px;
    top: 4px;
    color: #626262;
    font-size: 20px;
    line-height: 20px;
}

.frame .badge {
    right: 1px;
    top: 3px;
    width: 22px;
    height: 18px;
    border: 1px dotted #666;
    font-size: 14px;
    line-height: 14px;
}

.frame .photo {
    height: 90px;
}

.frame.portrait {
    padding: 18px 37px 0 40px;
}

.frame.portrait .photo {
    height: 122px;
}

.frame.selected {
    background: #cbcbcb;
    box-shadow: inset 0 0 0 2px #eee;
}

.frame.selected b {
    color: #999;
}

.frame.selected .photo {
    box-shadow: 0 0 0 4px #eee;
}

.bottom-edge {
    display: flex;
    justify-content: center;
    height: 29px;
    padding-top: 8px;
}

/* dock */
.dock {
    display: flex;
    align-items: center;
    height: 96px;
    margin: 13px 61px 10px 60px;
    padding: 0 4px 6px;
    border: 2px solid rgba(255, 255, 255, 0.2);
    border-radius: 28px;
    background: linear-gradient(90deg, #60718c, #60718c 15%, #a0606c 21%, #d0585f 30%, #cf6058 36%, #f96459 41%, #f85a56 55%, #d8586a 63%, #b35c72 74%, #dc545c 80%, #f15a55 90%, #f05a55);
}

.apps {
    display: flex;
    flex: 4 1 0;
    min-width: 0;
}

.apps.main {
    flex-grow: 23;
}

.apps.minis {
    flex-grow: 7;
}

.apps a {
    position: relative;
    flex: 1 1 0;
    min-width: 0;
    height: 66px;
    display: flex;
    align-items: center;
    justify-content: center;
}

.apps svg {
    width: 60px;
    height: 60px;
}

.apps svg svg {
    width: 18px;
    height: 21px;
}

.apps .wide {
    width: 66px;
    height: 66px;
}

.apps .mini {
    width: 70px;
    overflow: visible;
}

.apps .trash {
    width: 54px;
    height: 68px;
}

.run::after {
    content: "";
    position: absolute;
    bottom: -14px;
    left: 50%;
    width: 8px;
    height: 8px;
    margin-left: -4px;
    border-radius: 50%;
    background: rgba(0, 0, 0, 0.75);
}

.dock-sep {
    width: 2px;
    height: 72px;
    margin: 0 17px;
    background: rgba(130, 10, 20, 0.6);
}

.lrc-text {
    fill: #31a8ff;
    font-size: 32px;
    font-weight: 500;
    text-anchor: middle;
}

.cal-month {
    fill: #fff;
    font-size: 12px;
    font-weight: bold;
    text-anchor: middle;
}

.cal-day {
    fill: #222;
    font-family: Inter, sans-serif;
    font-size: 34px;
    font-weight: 300;
    text-anchor: middle;
}

.tv {
    fill: #fff;
    font-family: Inter, sans-serif;
    font-size: 26px;
    font-weight: 500;
}

.xl {
    fill: #fff;
    font-size: 18px;
    font-weight: bold;
    text-anchor: middle;
}
```
